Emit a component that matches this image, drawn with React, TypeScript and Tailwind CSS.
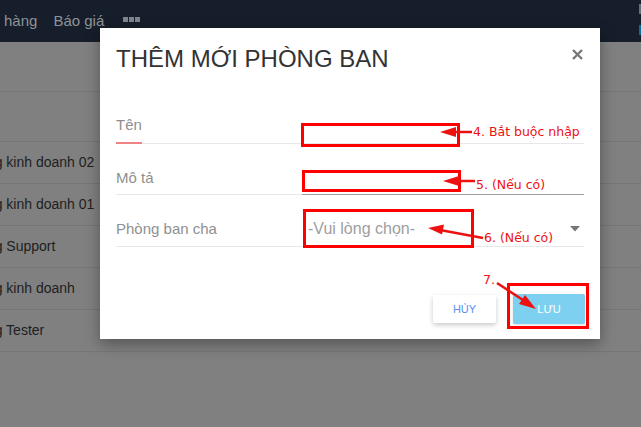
import React from "react";

const rows = ["Phòng kinh doanh 02", "Phòng kinh doanh 01", "Phòng Support", "Phòng kinh doanh", "Phòng Tester"];

export default function App() {
  return (
    <div className="relative w-[641px] h-[427px] overflow-hidden bg-[#808080] font-['Liberation_Sans',Arial,sans-serif]">
      {/* navbar */}
      <div className="flex h-[42px] items-center bg-[#151e2a] pl-[4px] text-[15px] text-[#8e9399]">
        <span>hàng</span>
        <span className="ml-[16px]">Báo giá</span>
        <span className="ml-[19px] flex gap-[1px] pb-[3px]">
          <span className="h-[5px] w-[5px] bg-[#7f858d]" />
          <span className="h-[5px] w-[5px] bg-[#7f858d]" />
          <span className="h-[5px] w-[5px] bg-[#7f858d]" />
        </span>
        <div className="ml-auto flex h-full w-[2px] flex-col pt-[4px]">
          <div className="h-[10px] w-[2px] bg-[#6b6f75]" />
          <div className="mt-[11px] h-[10px] w-[2px] bg-[#0e6a96]" />
        </div>
      </div>
      {/* background table */}
      <div className="h-[50px] border-b border-[#767676]" />
      <div className="h-[50px] border-b border-[#767676]" />
      {rows.map((r) => (
        <div key={r} className="flex h-[42px] items-center overflow-hidden border-b border-[#767676] text-[14px] text-[#1e1e1e]">
          <span className="ml-[-38px] whitespace-nowrap">{r}</span>
        </div>
      ))}

      {/* modal */}
      <div className="absolute left-[100px] top-[28px] flex h-[311px] w-[500px] flex-col bg-white px-[16px] pt-[15px] shadow-[0_5px_14px_rgba(0,0,0,0.35)]">
        <div className="flex items-start justify-between">
          <div className="text-[24px] leading-[32px] text-[#333]">THÊM MỚI PHÒNG BAN</div>
          <svg width="11" height="11" viewBox="0 0 11 11" className="mr-[1px] mt-[6px]">
            <path d="M1 1 L10 10 M10 1 L1 10" stroke="#777" strokeWidth="2.4" />
          </svg>
        </div>
        <div className="mt-[33px] flex h-[36px] items-stretch border-b border-[#e8e8e8] text-[15px] text-[#8f8f8f]">
          <div className="w-[186px] flex">
            <span className="-mb-px flex items-center border-b-2 border-[#ef8383] pt-[1px]">Tên</span>
          </div>
          <div className="flex-1" />
        </div>
        <div className="mt-[15px] flex h-[36px] items-stretch border-b border-[#e8e8e8] text-[15px] text-[#8f8f8f]">
          <div className="flex w-[186px] items-center pt-[3px]">Mô tả</div>
          <div className="-mb-px flex-1 border-b border-[#9e9e9e]" />
        </div>
        <div className="mt-[16px] flex h-[36px] items-center border-b border-[#e8e8e8] text-[15px] text-[#8f8f8f]">
          <div className="w-[186px] pt-[2px]">Phòng ban cha</div>
          <div className="flex flex-1 items-center justify-between pl-[6px] pr-[4px]">
            <span className="text-[16px] text-[#9e9e9e]">-Vui lòng chọn-</span>
            <svg width="10" height="6" viewBox="0 0 10 6">
              <path d="M0 0 L10 0 L5 5.5 Z" fill="#777" />
            </svg>
          </div>
        </div>
        <div className="mt-[47px] mr-[-1px] flex justify-end gap-[17px]">
          <button className="mt-[1px] h-[28px] w-[63px] rounded-[2px] bg-white text-[11px] text-[#5b8ff0] shadow-[0_2px_5px_rgba(0,0,0,0.22)]">
            HỦY
          </button>
          <button className="h-[30px] w-[72px] rounded-[2px] bg-[#7dd0ef] text-[11px] text-white shadow-[0_1px_3px_rgba(0,0,0,0.15)]">
            LƯU
          </button>
        </div>
      </div>

      {/* annotations */}
      <svg className="pointer-events-none absolute left-0 top-0" width="641" height="427">
        <rect x="302.5" y="124.5" width="156" height="21" fill="none" stroke="#ff0000" strokeWidth="3" />
        <rect x="303.5" y="171.5" width="156" height="19" fill="none" stroke="#ff0000" strokeWidth="3" />
        <rect x="304.5" y="210.5" width="168" height="36" fill="none" stroke="#ff0000" strokeWidth="3" />
        <rect x="508.5" y="284.5" width="79" height="43" fill="none" stroke="#ff0000" strokeWidth="3" />
        <line x1="472" y1="132" x2="452" y2="132" stroke="#ee1111" strokeWidth="2.5" />
        <path d="M440 132 L456 127 L456 137 Z" fill="#ee1111" />
        <line x1="475" y1="181" x2="455" y2="181" stroke="#ee1111" strokeWidth="2.5" />
        <path d="M443 181 L459 176 L459 186 Z" fill="#ee1111" />
        <line x1="483" y1="238" x2="440" y2="230" stroke="#ee1111" strokeWidth="2.5" />
        <path d="M428 228 L444 224.5 L442 234.5 Z" fill="#ee1111" />
        <line x1="497" y1="283" x2="526" y2="302" stroke="#ee1111" strokeWidth="2.5" />
        <path d="M536 309 L519 304 L525 295 Z" fill="#ee1111" />
      </svg>
      <span className="absolute left-[473px] top-[123px] whitespace-nowrap font-['DejaVu_Sans',sans-serif] text-[12.5px] leading-[18px] text-[#ee1111]">
        4. Bắt buộc nhập
      </span>
      <span className="absolute left-[476px] top-[176px] whitespace-nowrap font-['DejaVu_Sans',sans-serif] text-[12.5px] leading-[18px] text-[#ee1111]">
        5. (Nếu có)
      </span>
      <span className="absolute left-[484px] top-[229px] whitespace-nowrap font-['DejaVu_Sans',sans-serif] text-[12.5px] leading-[18px] text-[#ee1111]">
        6. (Nếu có)
      </span>
      <span className="absolute left-[483px] top-[271px] whitespace-nowrap font-['DejaVu_Sans',sans-serif] text-[12.5px] leading-[18px] text-[#ee1111]">
        7.
      </span>
    </div>
  );
}
